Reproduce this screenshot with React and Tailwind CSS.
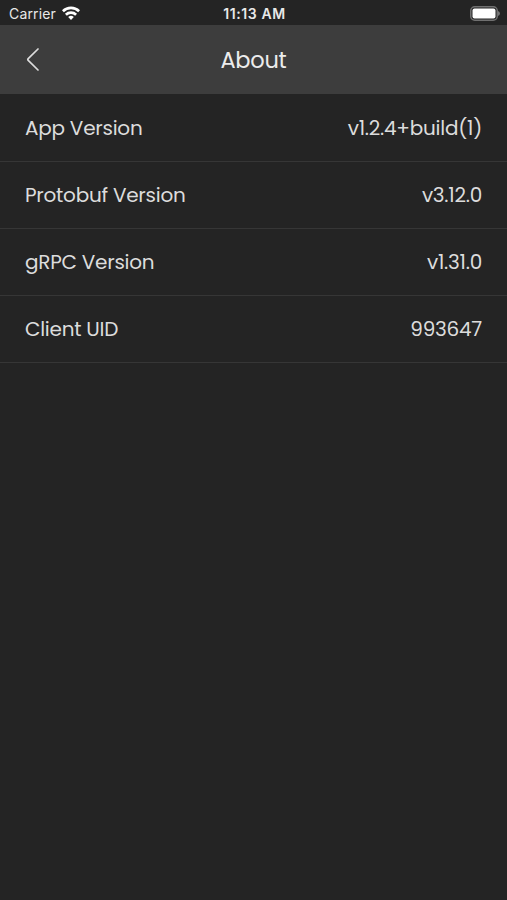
const rows = [
  { label: 'App Version', value: 'v1.2.4+build(1)' },
  { label: 'Protobuf Version', value: 'v3.12.0' },
  { label: 'gRPC Version', value: 'v1.31.0' },
  { label: 'Client UID', value: '993647' },
];

function StatusBar() {
  return (
    <div className="h-[25px] grid grid-cols-3 items-center pl-[9px] pr-[7px] pt-[2px] font-['Inter',sans-serif] text-[#e8e8e8]">
      <div className="flex items-center gap-[6px]">
        <span className="text-[14px] leading-none tracking-[0.15px]">Carrier</span>
        <svg className="mb-[2px]" width="18" height="14" viewBox="0 0 18 14" fill="none" stroke="#fff" strokeWidth="2.7">
          <path d="M.9 5.2a11.6 11.6 0 0 1 16.2 0" />
          <path d="M3.9 8.7a7.3 7.3 0 0 1 10.2 0" />
          <path d="M9 14 6.2 11a4 4 0 0 1 5.6 0Z" fill="#fff" stroke="none" />
        </svg>
      </div>
      <div className="text-center text-[14px] leading-none font-semibold tracking-[0.6px]">11:13 AM</div>
      <svg className="justify-self-end mb-px" width="30" height="15" viewBox="0 0 30 15">
        <rect x="0.75" y="0.75" width="26.5" height="13.5" rx="4" fill="none" stroke="#707070" strokeWidth="1.5" />
        <rect x="2.5" y="2.5" width="23" height="10" rx="2" fill="#fff" />
        <path d="M28 5v5q2-.8 2-2.5T28 5Z" fill="#777" />
      </svg>
    </div>
  );
}

export default function App() {
  return (
    <div className="h-[900px] w-[507px] bg-[#242424] text-[#dcdcdc] font-['Poppins','Open_Sans',sans-serif] overflow-hidden">
      <StatusBar />
      <header className="h-[69px] bg-[#3d3d3d] grid grid-cols-[1fr_auto_1fr] items-center px-[25px]">
        <button aria-label="Back">
          <svg
            width="14"
            height="24"
            viewBox="0 0 14 24"
            fill="none"
            stroke="currentColor"
            strokeWidth="1.7"
            strokeLinecap="round"
            strokeLinejoin="round"
          >
            <path d="M13 1 3.2 10.7q-.8.8 0 1.6L13 22" />
          </svg>
        </button>
        <h1 className="text-[22.5px] leading-7 pt-px tracking-[-0.25px] text-[#ececec]">About</h1>
      </header>
      <ul className="pt-px">
        {rows.map((row) => (
          <li
            key={row.label}
            className="h-[67px] px-[25px] flex items-center justify-between border-b border-[#363636] text-[20px] leading-7 tracking-[-0.25px]"
          >
            <span>{row.label}</span>
            <span>{row.value}</span>
          </li>
        ))}
      </ul>
    </div>
  );
}
